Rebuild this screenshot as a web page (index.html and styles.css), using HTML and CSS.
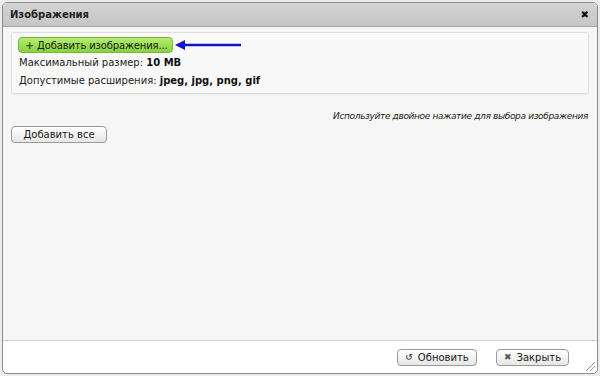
FILE: index.html
```html
<!DOCTYPE html>
<html lang="ru">

<head>
    <meta charset="UTF-8">
    <title>Изображения</title>
    <link rel="stylesheet" href="styles.css">
</head>

<body>
    <div class="dialog">
        <div class="titlebar">
            <span class="title">Изображения</span>
            <span class="close">&#10006;</span>
        </div>

        <div class="content">
            <div class="upload-box">
                <div class="upload-row">
                    <button class="btn-green"><span class="plus">+</span> Добавить изображения...</button>
                    <svg class="arrow" width="67" height="10" viewBox="0 0 67 10">
                        <line x1="6" y1="5" x2="66" y2="5" stroke="#1414c8" stroke-width="2.4" />
                        <polygon points="0,5 10,0 10,10" fill="#1414c8" />
                    </svg>
                </div>
                <p class="info">Максимальный размер: <b>10 MB</b></p>
                <p class="info">Допустимые расширения: <b>jpeg, jpg, png, gif</b></p>
            </div>

            <p class="hint">Используйте двойное нажатие для выбора изображения</p>

            <button class="btn btn-all">Добавить все</button>
        </div>

        <div class="footer">
            <button class="btn btn-footer"><span class="ico">&#8634;</span> Обновить</button>
            <button class="btn btn-footer btn-close"><span class="ico">&#10006;</span> Закрыть</button>
            <span class="grip"></span>
        </div>
    </div>
</body>

</html>
```

FILE: styles.css
```css
html,
body {
    margin: 0;
    padding: 0;
    background: #ececec;
}

body {
    font-family: "DejaVu Sans", Verdana, sans-serif;
    font-size: 10px;
    color: #222;
    padding: 2px;
}

.dialog {
    height: 372px;
    border: 1px solid #8c8c8c;
    border-radius: 5px;
    background: #fff;
    display: flex;
    flex-direction: column;
    overflow: hidden;
    box-sizing: border-box;
}

.titlebar {
    height: 23px;
    background: linear-gradient(#d4d4d4, #c5c5c5);
    border-bottom: 1px solid #a9a9a9;
    display: flex;
    align-items: center;
    justify-content: space-between;
    padding: 0 8px 0 7px;
    flex-shrink: 0;
}

.title {
    font-weight: bold;
    font-size: 10px;
    color: #222;
}

.close {
    font-size: 10px;
    color: #111;
    font-weight: bold;
}

.content {
    flex: 1;
    background: #f6f6f6;
    padding: 5px 8px 0 8px;
    border-bottom: 1px solid #cfcfcf;
}

.upload-box {
    background: #f9f9f9;
    border: 1px solid #e0e0e0;
    border-radius: 3px;
    padding: 4px 6px 1px 6px;
    box-shadow: 0 1px 1px rgba(0, 0, 0, 0.06);
}

.upload-row {
    display: flex;
    align-items: center;
}

.btn-green {
    font-family: inherit;
    font-size: 10px;
    color: #1a1a1a;
    height: 16px;
    padding: 0 5px 0 6px;
    border: 1px solid #76b83a;
    border-radius: 4px;
    background: linear-gradient(#b6ec70, #86d23e);
    display: flex;
    align-items: center;
    gap: 3px;
    white-space: nowrap;
    letter-spacing: -0.15px;
    cursor: pointer;
}

.plus {
    font-weight: bold;
    color: #3a5a2a;
    font-size: 11px;
}

.arrow {
    margin-left: 2px;
}

.info {
    margin: 3px 0 5px 1px;
    line-height: 13px;
}

.info b {
    font-weight: bold;
    color: #111;
}

.hint {
    margin: 17px 1px 0 0;
    text-align: right;
    font-style: italic;
    font-size: 9px;
    letter-spacing: -0.35px;
    color: #222;
}

.btn {
    font-family: inherit;
    font-size: 10px;
    color: #1a1a1a;
    height: 17px;
    padding: 0 6px;
    border: 1px solid #9a9a9a;
    border-radius: 4px;
    background: linear-gradient(#ffffff, #e6e6e6);
    white-space: nowrap;
    cursor: pointer;
}

.btn-all {
    margin-top: 5px;
    width: 96px;
}

.footer {
    height: 32px;
    flex-shrink: 0;
    display: flex;
    align-items: center;
    justify-content: flex-end;
    gap: 19px;
    padding-right: 28px;
    position: relative;
}

.btn-footer {
    width: 80px;
    display: flex;
    align-items: center;
    justify-content: center;
    gap: 5px;
}

.btn-close {
    width: 73px;
}

.ico {
    font-size: 9px;
    color: #555;
    font-weight: bold;
}

.grip {
    position: absolute;
    right: 2px;
    bottom: 2px;
    width: 9px;
    height: 9px;
    background: linear-gradient(135deg, transparent 45%, #999 45%, #999 52%, transparent 52%, transparent 68%, #999 68%, #999 75%, transparent 75%);
}
```
